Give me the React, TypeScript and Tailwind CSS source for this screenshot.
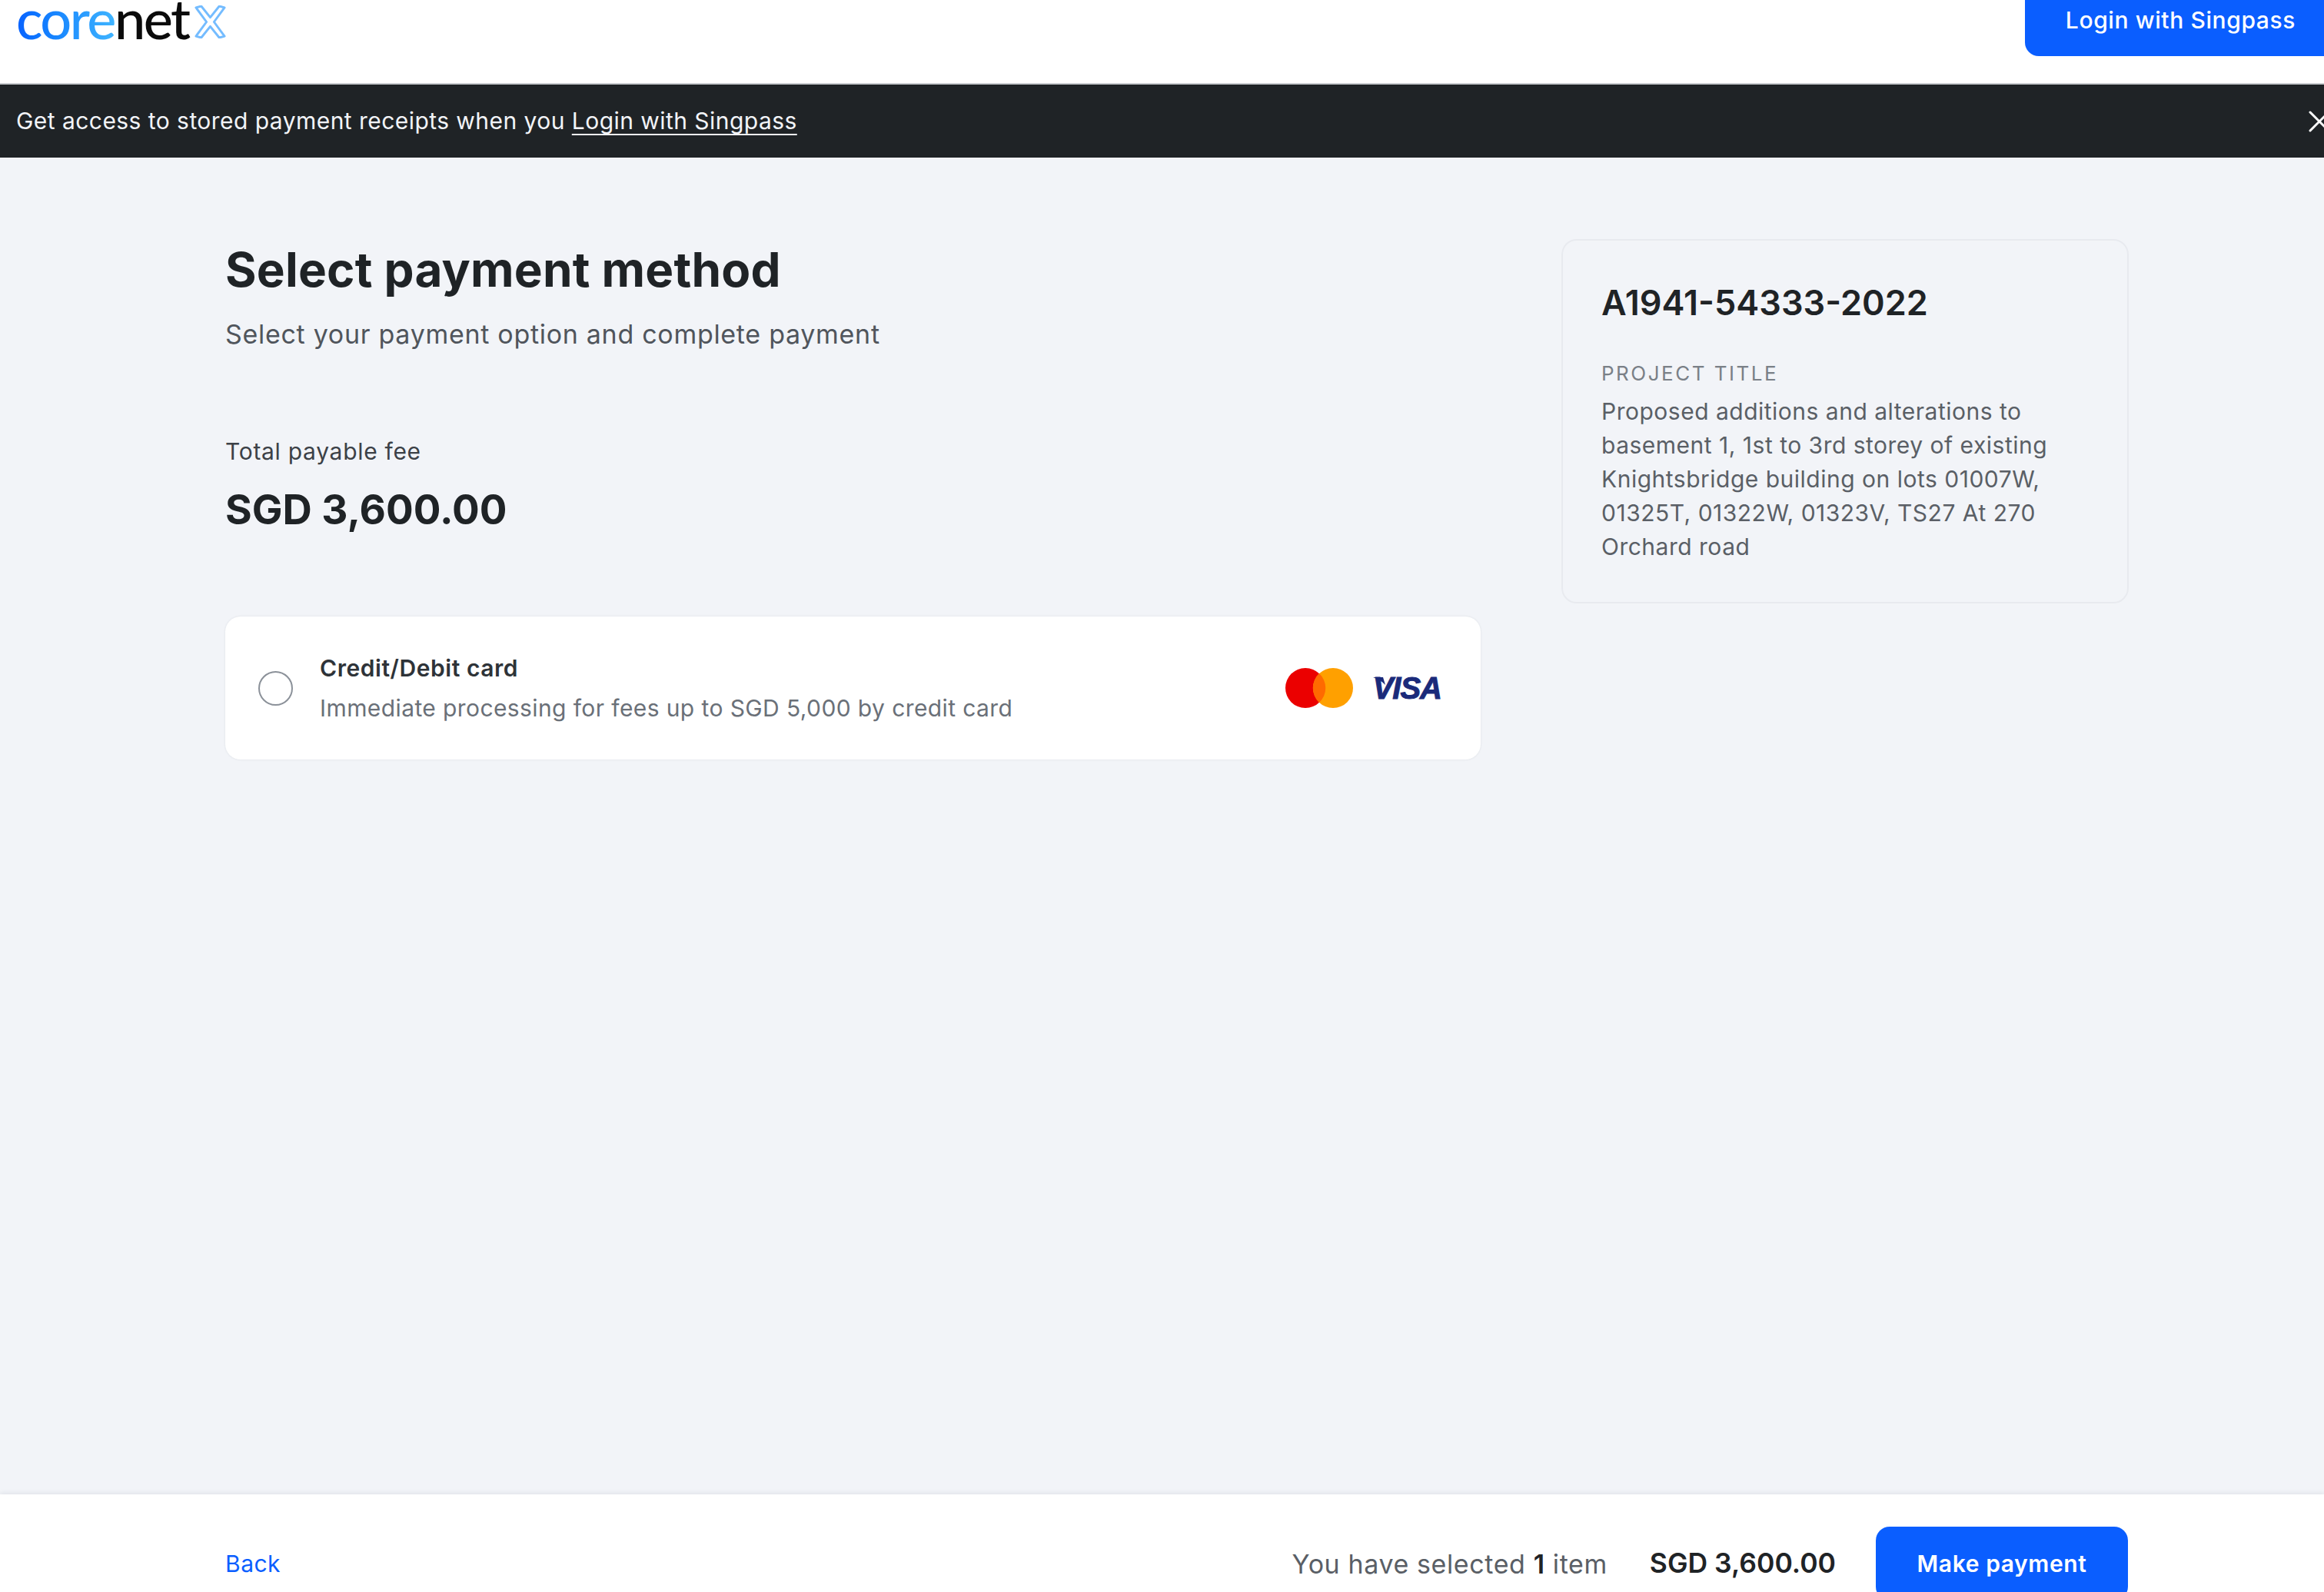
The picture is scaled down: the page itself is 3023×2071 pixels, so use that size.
import { X } from "lucide-react";

const font = "font-['Inter','Noto_Sans',sans-serif]";

function Logo() {
  return (
    <div className="flex items-start font-['Lato',sans-serif] font-medium text-[72px] leading-[60px] tracking-[-2.5px] -mt-[7px]">
      <span className="bg-gradient-to-r from-[#0a62ff] to-[#3fb4ff] bg-clip-text text-transparent">core</span>
      <span className="text-[#0b0b0b]">net</span>
      <svg viewBox="0 0 44 44" className="w-[43px] h-[43px] mt-[14px] ml-[6px]" fill="none" stroke="#74bcff" strokeWidth="3" strokeLinejoin="round">
        <path d="M3 3 L10 1 L22 16 L34 1 L41 3 L27 22 L41 41 L34 43 L22 28 L10 43 L3 41 L17 22 Z" />
      </svg>
    </div>
  );
}

function CardLogos() {
  return (
    <div className="flex items-center gap-[27px]">
      <svg viewBox="0 0 88 52" className="w-[88px] h-[52px]">
        <circle cx="26" cy="26" r="26" fill="#eb0000" />
        <circle cx="62" cy="26" r="26" fill="#ffa000" />
        <path d="M44 7 a26 26 0 0 1 0 38 a26 26 0 0 1 0 -38 Z" fill="#ff6a00" />
      </svg>
      <div className="relative w-[88px] h-[30px] flex items-center justify-end">
        <svg viewBox="0 0 16 10" className="absolute -left-[1px] top-[1px] w-[16px] h-[10px]">
          <path d="M0 0 H13 L16 10 C11 5 6 2 0 0 Z" fill="#1a2a7a" />
        </svg>
        <span className="font-['Liberation_Sans',sans-serif] italic font-bold text-[#1a2a7a] text-[40px] leading-none tracking-[-1px] [-webkit-text-stroke:1px_#1a2a7a]">VISA</span>
      </div>
    </div>
  );
}

export default function App() {
  return (
    <div className={`${font} w-full h-[2071px] overflow-hidden flex flex-col bg-[#f2f4f8]`}>
      {/* Header */}
      <header className="h-[110px] shrink-0 bg-white border-b-2 border-[#c9ccd0] flex items-start justify-between pl-[21px] -mr-[16px]">
        <Logo />
        <button className="h-[94px] -mt-[21px] px-[53px] bg-[#0a5eff] rounded-b-[18px] text-white text-[30px] tracking-[0.6px] font-medium">
          Login with Singpass
        </button>
      </header>

      {/* Singpass banner */}
      <div className="h-[95px] shrink-0 bg-[#1f2326] flex items-center justify-between pl-[21px] -mr-[18px]">
        <p className="text-[#f2f4f8] text-[30px] tracking-[0.45px]">
          Get access to stored payment receipts when you{" "}
          <span className="underline underline-offset-[6px] decoration-2">Login with Singpass</span>
        </p>
        <X className="w-[48px] h-[48px] text-white" strokeWidth={1.5} />
      </div>

      {/* Content */}
      <main className="h-[1739px] shrink-0 flex items-start gap-[105px] pl-[293px] pr-[255px] pt-[106px]">
        <section className="w-[1633px] shrink-0">
          <h1 className="mt-[2px] text-[62px] leading-[76px] tracking-[0.2px] font-bold text-[#1f2326]">Select payment method</h1>
          <p className="mt-[23px] text-[34px] leading-[46px] tracking-[0.7px] text-[#50555c]">Select your payment option and complete payment</p>
          <p className="mt-[108px] text-[30px] leading-[42px] tracking-[0.7px] text-[#3c4147]">Total payable fee</p>
          <p className="mt-[23px] text-[53px] leading-[64px] font-bold text-[#1f2326]">SGD 3,600.00</p>

          <div className="mt-[107px] h-[186px] bg-white rounded-[20px] shadow-[0_0_3px_rgba(30,40,60,0.1)] flex items-center pl-[43px] pr-[51px]">
            <span className="w-[45px] h-[45px] rounded-full border-2 border-[#8b9199] bg-white shrink-0" />
            <div className="ml-[35px] flex-1">
              <p className="text-[30px] leading-[40px] tracking-[0.55px] font-semibold text-[#2e3338]">Credit/Debit card</p>
              <p className="mt-[12px] text-[30px] leading-[40px] tracking-[0.4px] text-[#6a7078]">Immediate processing for fees up to SGD 5,000 by credit card</p>
            </div>
            <CardLogos />
          </div>
        </section>

        <aside className="w-[738px] h-[474px] shrink-0 rounded-[20px] border-2 border-[#e8eaef] px-[50px] pt-[52px]">
          <p className="text-[45px] leading-[58px] font-semibold text-[#1f2326]">A1941-54333-2022</p>
          <p className="mt-[45px] text-[26px] leading-[36px] tracking-[2.5px] text-[#7a8087]">PROJECT TITLE</p>
          <p className="mt-[9px] text-[30px] leading-[44px] tracking-[0.5px] text-[#5a5f66]">
            Proposed additions and alterations to basement 1, 1st to 3rd storey of existing Knightsbridge building on lots 01007W, 01325T, 01322W, 01323V, TS27 At 270 Orchard road
          </p>
        </aside>
      </main>

      {/* Footer */}
      <footer className="h-[180px] shrink-0 bg-white shadow-[0_-2px_6px_rgba(30,40,60,0.08)] flex items-center justify-between pl-[293px] pr-[255px]">
        <a className="text-[#0a5eff] text-[30px] tracking-[0.5px]">Back</a>
        <div className="flex items-center">
          <p className="text-[34px] tracking-[0.6px] text-[#5a5f66]">
            You have selected <span className="font-semibold text-[#1f2326]">1</span> item
          </p>
          <p className="ml-[55px] text-[35.5px] font-semibold text-[#1f2326]">SGD 3,600.00</p>
          <button className="ml-[52px] w-[328px] h-[96px] bg-[#0a5eff] rounded-[18px] text-white text-[30px] tracking-[0.6px] font-semibold">
            Make payment
          </button>
        </div>
      </footer>
    </div>
  );
}
